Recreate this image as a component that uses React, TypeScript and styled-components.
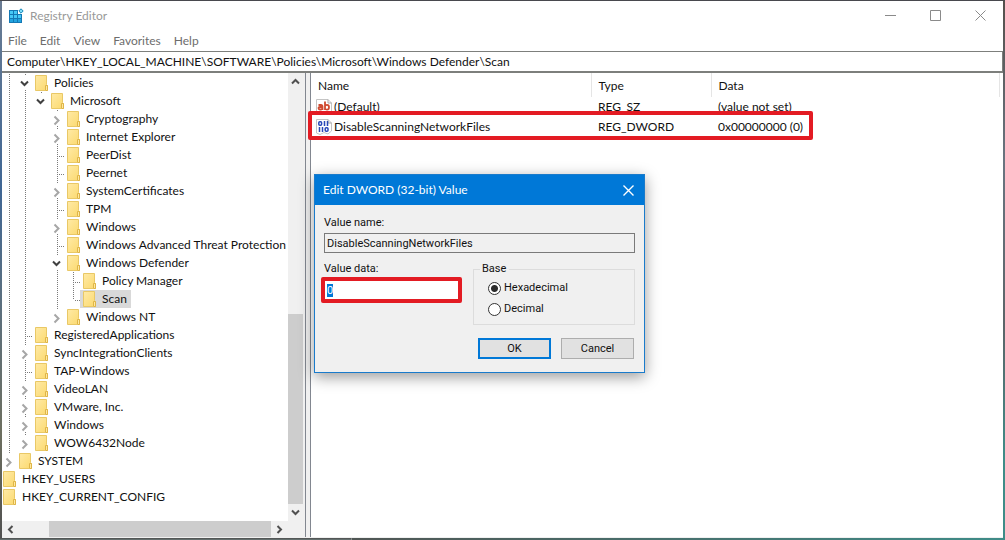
import React, { useEffect, useRef } from 'react';
import styled, { createGlobalStyle } from 'styled-components';

const uiFont = 'Lato, "Open Sans", sans-serif';
const dialogFont = 'Roboto, "Liberation Sans", sans-serif';

const GlobalStyle = createGlobalStyle`
  *, *::before, *::after { box-sizing: border-box; }
  body { margin: 0; font-family: ${uiFont}; font-size: 12px; line-height: 18px; color: #111; }
  button, input { font: inherit; color: inherit; margin: 0; }
`;

const Desktop = styled.div`
  display: flex;
  min-height: 100vh;
  padding: 1px 2px 2px;
  background:
    linear-gradient(90deg, #505654, #3f8c88) bottom right / 65% 2px no-repeat,
    linear-gradient(#4b4b4b, #6c7b7a) bottom left / 35% 2px no-repeat,
    linear-gradient(#3c3d42, #55555a) top / 100% 1px no-repeat,
    linear-gradient(#6a7c93, #3f6694 35%, #5a6f80 55%, #6d6f60 80%, #505050) left / 2px 100% no-repeat,
    linear-gradient(#55504c, #6a7480 30%, #5c6468 60%, #3f8c88 85%) right / 2px 100% no-repeat;
`;

const Window = styled.main`
  position: relative;
  flex: 1;
  min-width: 0;
  display: flex;
  flex-direction: column;
  background: #fff;
`;

const TitleBar = styled.header`
  display: flex;
  align-items: center;
  height: 29px;
  padding-left: 6px;
  gap: 6px;
  color: #999;
`;

const Title = styled.h1`
  flex: 1;
  margin: 0;
  font-size: 12px;
  font-weight: 400;
`;

const CaptionButtons = styled.div`
  display: flex;
`;

const CaptionButton = styled.button`
  display: grid;
  place-items: center;
  width: 45px;
  height: 29px;
  padding: 0;
  border: 0;
  background: transparent;
  color: #8a8a8a;
`;

const MenuBar = styled.nav`
  display: flex;
  align-items: center;
  height: 21px;
  padding-left: 6px;
  gap: 13px;
`;

const MenuItem = styled.button`
  padding: 0;
  border: 0;
  background: transparent;
  color: #6d6d6d;
`;

const AddressBar = styled.input`
  width: 100%;
  height: 22px;
  padding: 0 5px;
  border: 1px solid #7d7f7c;
  border-bottom-width: 2px;
  border-left: 0;
  background: #fff;
  outline: 0;
`;

const Panes = styled.div`
  flex: 1;
  display: flex;
  gap: 4px;
  padding-bottom: 1px;
  background: #f0f0f0;
`;

const TreePane = styled.section`
  flex: 0 0 304px;
  display: grid;
  grid-template: minmax(0, 1fr) 16px / minmax(0, 1fr) 17px;
  border-right: 1px solid #828790;
`;

const Tree = styled.ul`
  margin: 0;
  padding: 1px 0 14px 1px;
  list-style: none;
  overflow: hidden;
  background: #fff;
`;

const TreeRow = styled.li`
  display: flex;
  height: 18px;
  white-space: nowrap;
  & > * { flex-shrink: 0; }
`;

const TreeItem = styled.span<{ $selected?: boolean }>`
  display: flex;
  align-items: center;
  gap: 6px;
  height: 18px;
  margin-left: -3px;
  padding: 0 4px 0 3px;
  background: ${(p) => (p.$selected ? '#d9d9d9' : 'transparent')};
`;

const ScrollBar = styled.div<{ $vertical?: boolean }>`
  display: flex;
  flex-direction: ${(p) => (p.$vertical ? 'column' : 'row')};
  padding: ${(p) => (p.$vertical ? '0 2px 0 0' : '0')};
  background: #f0f0f0;
`;

const ScrollArrow = styled.button`
  flex: 0 0 17px;
  display: grid;
  place-items: center;
  padding: 0;
  border: 0;
  background: transparent;
  color: #505050;
`;

const ScrollSpace = styled.div<{ $share: number }>`
  flex: ${(p) => p.$share};
`;

const ScrollThumb = styled(ScrollSpace)`
  background: #cdcdcd;
`;

const ListPane = styled.section`
  flex: 1;
  min-width: 0;
  border-left: 1px solid #828790;
  background: #fff;
`;

const ValueTable = styled.table`
  position: relative;
  width: calc(100% - 3px);
  border-collapse: collapse;
  table-layout: fixed;
`;

const HeadCell = styled.th<{ $width?: number }>`
  width: ${(p) => (p.$width ? `${p.$width}px` : 'auto')};
  height: 24px;
  padding: 2px 6px 0 7px;
  border-right: 1px solid #e5e5e5;
  font-weight: 400;
  text-align: left;
`;

const Cell = styled.td`
  height: 20px;
  padding: 0 7px;
  white-space: nowrap;
`;

const NameCell = styled.div`
  display: flex;
  align-items: center;
  gap: 2px;
  margin-left: -2px;
`;

const RowHighlight = styled.div`
  position: absolute;
  top: 38px;
  left: -3px;
  width: 505px;
  height: 29px;
  border: 4px solid #e31b23;
  border-radius: 2px;
  pointer-events: none;
`;

const Dialog = styled.form`
  position: absolute;
  top: 173px;
  left: 312px;
  width: 331px;
  border: 1px solid #1a7bcb;
  background: #f0f0f0;
  box-shadow: 0 4px 14px rgba(0, 0, 0, 0.4);
  font-family: ${dialogFont};
  font-size: 11px;
  line-height: 14px;
`;

const DialogTitle = styled.header`
  display: flex;
  align-items: center;
  justify-content: space-between;
  height: 30px;
  padding-left: 8px;
  background: #0078d7;
  color: #fff;
  font-family: ${uiFont};
  font-size: 12px;
`;

const DialogClose = styled(CaptionButton)`
  width: 31px;
  color: #fff;
`;

const DialogBody = styled.div`
  display: flex;
  flex-direction: column;
  padding: 11px 9px 13px;
`;

const Field = styled.div`
  display: flex;
  flex-direction: column;
  gap: 3px;
`;

const NameInput = styled.input`
  height: 20px;
  padding: 0 2px;
  border: 1px solid #7a7a7a;
  background: #f0f0f0;
  outline: 0;
`;

const DataInput = styled.input`
  width: 141px;
  height: 26px;
  margin: -2px 0 0 -3px;
  padding: 0 2px;
  border: 4px solid #e31b23;
  border-radius: 2px;
  background: #fff;
  outline: 0;
  &::selection { background: #0078d7; color: #fff; }
`;

const Columns = styled.div`
  display: flex;
  justify-content: space-between;
  margin-top: 9px;
`;

const BaseGroup = styled.fieldset`
  display: flex;
  flex-direction: column;
  gap: 7px;
  width: 162px;
  height: 63px;
  margin: 0;
  padding: 5px 14px 0;
  border: 1px solid #dcdcdc;
`;

const Legend = styled.legend`
  margin-left: -8px;
  padding: 0 3px 0 2px;
`;

const RadioLabel = styled.label`
  display: flex;
  align-items: center;
  gap: 3px;
`;

const Radio = styled.input`
  appearance: none;
  width: 13px;
  height: 13px;
  border: 1px solid #333;
  border-radius: 50%;
  background: #fff;
  &:checked { background: radial-gradient(circle, #2b2b2b 3px, #fff 4px); }
`;

const Actions = styled.div`
  display: flex;
  justify-content: flex-end;
  gap: 10px;
  margin: 13px 1px 0 0;
`;

const DialogButton = styled.button<{ $primary?: boolean }>`
  width: 73px;
  height: 21px;
  padding: 0;
  border: ${(p) => (p.$primary ? '2px solid #0078d7' : '1px solid #adadad')};
  background: #e1e1e1;
`;

type Mark = 'blank' | 'line' | 'tee' | 'elbow' | 'open' | 'closed' | 'openLast' | 'closedLast';

const dots = { stroke: '#7a7a7a', strokeDasharray: '1 1', fill: 'none' };

function Guide({ mark }: { mark: Mark }) {
  return (
    <svg width="16" height="18" aria-hidden="true">
      {(mark === 'line' || mark === 'tee') && <path d="M6.5 0V18" {...dots} />}
      {mark === 'elbow' && <path d="M6.5 0V10" {...dots} />}
      {(mark === 'tee' || mark === 'elbow') && <path d="M8 10.5H13" {...dots} />}
      {(mark === 'open' || mark === 'closed') && <path d="M6.5 0V2M6.5 16V18" {...dots} />}
      {(mark === 'openLast' || mark === 'closedLast') && <path d="M6.5 0V2" {...dots} />}
      {mark.startsWith('open') && <path d="M2 7.5L5.5 11L9 7.5" fill="none" stroke="#404040" strokeWidth="2" />}
      {mark.startsWith('closed') && <path d="M3.5 6.5L7.5 10.5L3.5 14.5" fill="none" stroke="#a6a6a6" strokeWidth="2" />}
    </svg>
  );
}

function FolderIcon() {
  return (
    <svg width="13" height="16" aria-hidden="true">
      <defs>
        <linearGradient id="folder" x1="0" y1="0" x2="1" y2="1">
          <stop offset="0" stopColor="#ffeaa6" />
          <stop offset="1" stopColor="#fbd96e" />
        </linearGradient>
      </defs>
      <path d="M.5 .5H11.5V9.5L12.5 10.5V15.5H.5Z" fill="url(#folder)" stroke="#e9c866" />
      <path d="M10.5 15V10.5H12.5V15.5H10.5" fill="#ffe9a0" stroke="#dfb548" />
    </svg>
  );
}

const treeRows: { name: string; guides: Mark[]; selected?: boolean }[] = [
  { name: 'Policies', guides: ['line', 'open'] },
  { name: 'Microsoft', guides: ['line', 'line', 'openLast'] },
  { name: 'Cryptography', guides: ['line', 'line', 'blank', 'closed'] },
  { name: 'Internet Explorer', guides: ['line', 'line', 'blank', 'closed'] },
  { name: 'PeerDist', guides: ['line', 'line', 'blank', 'tee'] },
  { name: 'Peernet', guides: ['line', 'line', 'blank', 'tee'] },
  { name: 'SystemCertificates', guides: ['line', 'line', 'blank', 'closed'] },
  { name: 'TPM', guides: ['line', 'line', 'blank', 'tee'] },
  { name: 'Windows', guides: ['line', 'line', 'blank', 'closed'] },
  { name: 'Windows Advanced Threat Protection', guides: ['line', 'line', 'blank', 'tee'] },
  { name: 'Windows Defender', guides: ['line', 'line', 'blank', 'open'] },
  { name: 'Policy Manager', guides: ['line', 'line', 'blank', 'line', 'tee'] },
  { name: 'Scan', guides: ['line', 'line', 'blank', 'line', 'elbow'], selected: true },
  { name: 'Windows NT', guides: ['line', 'line', 'blank', 'closedLast'] },
  { name: 'RegisteredApplications', guides: ['line', 'tee'] },
  { name: 'SyncIntegrationClients', guides: ['line', 'closed'] },
  { name: 'TAP-Windows', guides: ['line', 'tee'] },
  { name: 'VideoLAN', guides: ['line', 'closed'] },
  { name: 'VMware, Inc.', guides: ['line', 'closed'] },
  { name: 'Windows', guides: ['line', 'closed'] },
  { name: 'WOW6432Node', guides: ['line', 'closedLast'] },
  { name: 'SYSTEM', guides: ['closedLast'] },
  { name: 'HKEY_USERS', guides: [] },
  { name: 'HKEY_CURRENT_CONFIG', guides: [] },
];

function AppIcon() {
  return (
    <svg width="16" height="16" aria-hidden="true">
      <path d="M1 2H14V15H1Z" fill="#1478b4" />
      <path d="M2 3H5V6H2ZM6 3H9V6H6ZM2 7H5V10H2ZM6 7H9V10H6ZM10 7H13V10H10Z" fill="#45c8f5" />
      <path d="M2 11H5V14H2ZM6 11H9V14H6ZM10 11H13V14H10Z" fill="#22a4e0" />
      <path d="M10 1H15V6H10Z" fill="#fff" />
      <path d="M13 .8L15.2 3L13 5.2L10.8 3Z" fill="#7ddcf8" stroke="#1485b8" />
    </svg>
  );
}

function StringIcon() {
  return (
    <svg width="16" height="16" aria-hidden="true">
      <path d="M.5 .5H12L15.5 4V15.5H.5Z" fill="#fff" stroke="#c4c4c4" />
      <path d="M12 .5V4H15.5" fill="none" stroke="#a8a8a8" />
      <g fill="none" stroke="#cf4a30" strokeWidth="1.8">
        <path d="M2.5 6H5Q6.5 6 6.5 7.5V11M6.5 8H4Q2.5 8 2.5 9.2T4 10.5H5L6.5 9.5" />
        <path d="M9 2.5V11M9 7Q9.5 5.8 11 5.8Q13 5.8 13 8.2T11 10.6Q9.5 10.6 9 9.5" />
      </g>
    </svg>
  );
}

function BinaryIcon() {
  return (
    <svg width="16" height="16" aria-hidden="true">
      <path d="M.5 .5H12L15.5 4V12L12 15L8 13.5L4 15.5L.5 14Z" fill="#fff" stroke="#c4c4c4" />
      <path d="M12 .5V4H15.5" fill="none" stroke="#a8a8a8" />
      <g fill="none" stroke="#2848b8" strokeWidth="1.5">
        <rect x="2.8" y="2.8" width="2.8" height="3.4" rx="1" />
        <path d="M8.5 2V7M11.5 2V7M3.5 8V13M6.5 8V13" />
        <rect x="9.2" y="8.8" width="2.8" height="3.4" rx="1" />
      </g>
    </svg>
  );
}

function Arrow({ d }: { d: string }) {
  return (
    <svg width="9" height="9" aria-hidden="true">
      <path d={d} fill="none" stroke="currentColor" strokeWidth="2" />
    </svg>
  );
}

function Glyph({ d, weight = 1 }: { d: string; weight?: number }) {
  return (
    <svg width="11" height="11" aria-hidden="true">
      <path d={d} fill="none" stroke="currentColor" strokeWidth={weight} />
    </svg>
  );
}

const menus = ['File', 'Edit', 'View', 'Favorites', 'Help'];

function EditDialog() {
  const dataRef = useRef<HTMLInputElement>(null);
  useEffect(() => {
    dataRef.current?.focus();
    dataRef.current?.select();
  }, []);

  return (
    <Dialog role="dialog" aria-labelledby="dialog-title" onSubmit={(e) => e.preventDefault()}>
      <DialogTitle>
        <span id="dialog-title">Edit DWORD (32-bit) Value</span>
        <DialogClose type="button" aria-label="Close dialog">
          <Glyph d="M.5 .5L10.5 10.5M10.5 .5L.5 10.5" weight={1.4} />
        </DialogClose>
      </DialogTitle>
      <DialogBody>
        <Field>
          <label htmlFor="value-name">Value name:</label>
          <NameInput id="value-name" readOnly value="DisableScanningNetworkFiles" />
        </Field>
        <Columns>
          <Field>
            <label htmlFor="value-data">Value data:</label>
            <DataInput id="value-data" ref={dataRef} defaultValue="0" />
          </Field>
          <BaseGroup>
            <Legend>Base</Legend>
            <RadioLabel>
              <Radio type="radio" name="base" defaultChecked />
              Hexadecimal
            </RadioLabel>
            <RadioLabel>
              <Radio type="radio" name="base" />
              Decimal
            </RadioLabel>
          </BaseGroup>
        </Columns>
        <Actions>
          <DialogButton $primary type="submit">OK</DialogButton>
          <DialogButton type="button">Cancel</DialogButton>
        </Actions>
      </DialogBody>
    </Dialog>
  );
}

export default function App() {
  return (
    <Desktop>
      <GlobalStyle />
      <Window>
        <TitleBar>
          <AppIcon />
          <Title>Registry Editor</Title>
          <CaptionButtons>
            <CaptionButton aria-label="Minimize"><Glyph d="M0 5.5H11" /></CaptionButton>
            <CaptionButton aria-label="Maximize"><Glyph d="M.5 .5H10.5V10.5H.5Z" /></CaptionButton>
            <CaptionButton aria-label="Close"><Glyph d="M.5 .5L10.5 10.5M10.5 .5L.5 10.5" /></CaptionButton>
          </CaptionButtons>
        </TitleBar>
        <MenuBar>
          {menus.map((m) => <MenuItem key={m}>{m}</MenuItem>)}
        </MenuBar>
        <AddressBar
          aria-label="Address"
          defaultValue="Computer\HKEY_LOCAL_MACHINE\SOFTWARE\Policies\Microsoft\Windows Defender\Scan"
        />
        <Panes>
          <TreePane>
            <Tree>
              {treeRows.map((row, i) => (
                <TreeRow key={i}>
                  {row.guides.map((g, j) => <Guide key={j} mark={g} />)}
                  <TreeItem $selected={row.selected}>
                    <FolderIcon />
                    {row.name}
                  </TreeItem>
                </TreeRow>
              ))}
            </Tree>
            <ScrollBar $vertical>
              <ScrollArrow aria-label="Scroll up"><Arrow d="M1 6.5L4.5 3L8 6.5" /></ScrollArrow>
              <ScrollSpace $share={223} />
              <ScrollThumb $share={190} />
              <ScrollArrow aria-label="Scroll down"><Arrow d="M1 2.5L4.5 6L8 2.5" /></ScrollArrow>
            </ScrollBar>
            <ScrollBar>
              <ScrollArrow aria-label="Scroll left"><Arrow d="M6.5 1L3 4.5L6.5 8" /></ScrollArrow>
              <ScrollSpace $share={30} />
              <ScrollThumb $share={222} />
              <ScrollArrow aria-label="Scroll right"><Arrow d="M2.5 1L6 4.5L2.5 8" /></ScrollArrow>
            </ScrollBar>
          </TreePane>
          <ListPane>
            <ValueTable>
              <thead>
                <tr>
                  <HeadCell $width={280}>Name</HeadCell>
                  <HeadCell $width={120}>Type</HeadCell>
                  <HeadCell>Data</HeadCell>
                </tr>
              </thead>
              <tbody>
                <tr>
                  <Cell><NameCell><StringIcon />(Default)</NameCell></Cell>
                  <Cell>REG_SZ</Cell>
                  <Cell>(value not set)</Cell>
                </tr>
                <tr>
                  <Cell>
                    <NameCell><BinaryIcon />DisableScanningNetworkFiles</NameCell>
                    <RowHighlight />
                  </Cell>
                  <Cell>REG_DWORD</Cell>
                  <Cell>0x00000000 (0)</Cell>
                </tr>
              </tbody>
            </ValueTable>
          </ListPane>
        </Panes>
        <EditDialog />
      </Window>
    </Desktop>
  );
}
